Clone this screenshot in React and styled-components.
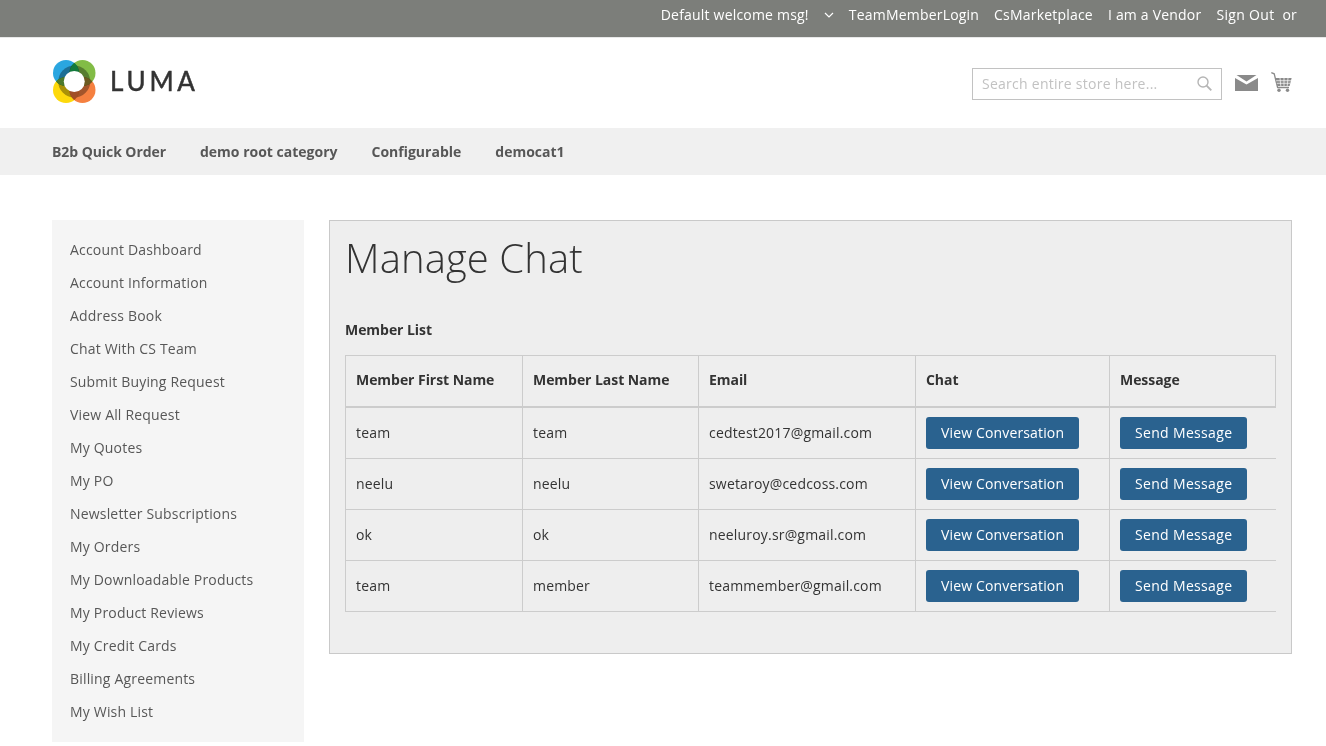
import React from "react";
import styled, { createGlobalStyle } from "styled-components";

const Global = createGlobalStyle`
  html, body { margin: 0; padding: 0; height: 746px; overflow: hidden; background: #fff; }
  body { font-family: "Open Sans", sans-serif; font-size: 14px; color: #333; letter-spacing: .18px; }
  * { box-sizing: border-box; }
`;

const TopBar = styled.div`
  height: 38px;
  background: #7c7e7a;
  border-bottom: 1px solid #e8e8e8;
  display: flex;
  justify-content: flex-end;
  align-items: center;
  padding: 0 29px 8px 0;
  color: #fff;
  font-size: 14px;
  letter-spacing: .2px;
`;
const TopItem = styled.span`
  margin-left: ${(p) => p.$gap ?? 15}px;
  letter-spacing: ${(p) => p.$spacing ?? 0.2}px;
  display: inline-flex;
  align-items: center;
`;
const Header = styled.header`
  height: 90px;
  padding: 0 34px 0 52px;
  display: flex;
  align-items: center;
  justify-content: space-between;
`;
const Logo = styled.div`
  display: flex;
  align-items: center;
  gap: 14px;
  margin-bottom: 3px;
`;
const LogoText = styled.span`
  font-family: "Lato", sans-serif;
  font-size: 26px;
  letter-spacing: 3.8px;
  color: #333;
  font-weight: 400;
  -webkit-text-stroke: .5px #333;
  padding-bottom: 2px;
`;
const HeaderRight = styled.div`
  display: flex;
  align-items: center;
  gap: 13px;
  margin-top: 2px;
`;
const Search = styled.div`
  width: 250px;
  height: 32px;
  border: 1px solid #c2c2c2;
  display: flex;
  align-items: center;
  justify-content: space-between;
  padding: 0 9px 2px;
  color: #c2c2c2;
  font-size: 14px;
  letter-spacing: .26px;
`;
const MailIcon = styled.svg`
  margin-bottom: 2px;
`;
const CartIcon = styled.svg`
  margin-bottom: 4px;
`;
const Nav = styled.nav`
  height: 47px;
  background: #f0f0f0;
  display: flex;
  align-items: center;
  padding-left: 52px;
  gap: 34px;
  font-weight: 700;
  color: #575757;
  letter-spacing: 0;
  span:first-child { letter-spacing: -.07px; }
`;
const Columns = styled.div`
  display: flex;
  padding: 45px 34px 0 52px;
  gap: 25px;
  align-items: flex-start;
`;
const Sidebar = styled.ul`
  list-style: none;
  margin: 0;
  padding: 13px 0 14px;
  width: 252px;
  flex: none;
  background: #f5f5f5;
`;
const SideItem = styled.li`
  height: 33px;
  line-height: 33px;
  padding-left: 18px;
  color: #575757;
`;
const Main = styled.main`
  flex: 1;
  min-width: 0;
  height: 434px;
  background: #eeeeee;
  border: 1px solid #c9c9c9;
  padding: 0 15px;
`;
const Title = styled.h1`
  margin: 10px 0 0;
  font-size: 40px;
  font-weight: 300;
  line-height: 54px;
  color: #333;
  letter-spacing: .1px;
`;
const SubTitle = styled.div`
  margin-top: 35px;
  font-weight: 700;
  line-height: 20px;
  color: #333;
  letter-spacing: -.05px;
`;
const Table = styled.table`
  margin-top: 15px;
  width: 931px;
  table-layout: fixed;
  border-collapse: collapse;
  tbody tr:first-child td { height: 52px; }
  tbody tr:not(:first-child) td:nth-child(-n+3) { padding-bottom: 2px; }
`;
const Col = styled.col`
  width: ${(p) => p.$w}px;
`;
const Th = styled.th`
  height: 51px;
  text-align: left;
  font-weight: 700;
  padding: 0 10px 2px;
  border: 1px solid #cccccc;
  border-bottom: 2px solid #cccccc;
  letter-spacing: -.05px;
`;
const Td = styled.td`
  height: 51px;
  padding: 0 10px;
  border-bottom: 1px solid #cccccc;
  border-left: 1px solid #cccccc;
`;
const Button = styled.button`
  height: 32px;
  padding: 0 15px;
  background: #2a628f;
  color: #fff;
  border: none;
  border-radius: 3px;
  font-family: inherit;
  font-size: 14px;
  line-height: 32px;
  display: block;
  letter-spacing: ${(p) => p.$spacing}px;
`;

const blend = { mixBlendMode: "multiply" };
const Mark = () => (
  <svg width="44" height="44" viewBox="0 0 44 44">
    <g style={{ isolation: "isolate" }}>
      <circle cx="14" cy="13" r="13" fill="#2aa6e0" style={blend} />
      <circle cx="30.5" cy="13" r="13" fill="#82bc46" style={blend} />
      <circle cx="14" cy="30" r="13" fill="#fdd90c" style={blend} />
      <circle cx="30.5" cy="30" r="13" fill="#f58040" style={blend} />
      <circle cx="22.25" cy="21.5" r="16" fill="#aaaaaa" style={blend} />
      <path d="M22.25 2.95 A13 13 0 0 1 22.25 23.05 A13 13 0 0 1 22.25 2.95 Z" fill="#137a3c" />
      <path d="M22.25 19.95 A13 13 0 0 1 22.25 40.05 A13 13 0 0 1 22.25 19.95 Z" fill="#a34f26" />
      <path d="M4.16 21.5 A13 13 0 0 1 23.84 21.5 A13 13 0 0 1 4.16 21.5 Z" fill="#4d7a2c" />
      <path d="M20.66 21.5 A13 13 0 0 1 40.34 21.5 A13 13 0 0 1 20.66 21.5 Z" fill="#6c5a20" />
      <circle cx="22.25" cy="21.5" r="10.5" fill="#fff" />
    </g>
  </svg>
);
const Loupe = () => (
  <svg width="15" height="15" viewBox="0 0 15 15" fill="none" stroke="#b5b5b5" strokeWidth="1.4">
    <circle cx="6" cy="6" r="5" />
    <path d="M9.6 9.6 L14.3 14.3" strokeWidth="1.9" />
  </svg>
);
const Mail = () => (
  <MailIcon width="23" height="16" viewBox="0 0 23 16">
    <path d="M1.5 0 L21.5 0 L11.5 6.5 Z" fill="#8a8a8a" />
    <path d="M0 3 L11.5 9.5 L23 3 L23 16 L0 16 Z" fill="#8a8a8a" />
  </MailIcon>
);
const Cart = () => (
  <CartIcon width="21" height="20" viewBox="0 0 21 20" fill="none">
    <path d="M0.3 0.6 L3.2 1.8 L6.6 15.5 L18 15.5" stroke="#8a8a8a" strokeWidth="1.3" />
    <path d="M4.6 6 L20.6 6 L18.6 14 L6.4 14 Z" fill="#8a8a8a" />
    <path d="M9 6 L9.8 14 M13 6 V14 M17 6 L16.2 14 M5.2 8.7 H20 M5.8 11.3 H19.3" stroke="#fff" strokeWidth=".7" />
    <circle cx="8" cy="18.3" r="1.7" fill="#8a8a8a" />
    <circle cx="16.5" cy="18.3" r="1.7" fill="#8a8a8a" />
  </CartIcon>
);
const Chevron = () => (
  <svg width="10" height="6" viewBox="0 0 10 6" fill="none" stroke="#fff" strokeWidth="1.2">
    <path d="M1 1 L5 5 L9 1" />
  </svg>
);

const side = [
  "Account Dashboard", "Account Information", "Address Book", "Chat With CS Team",
  "Submit Buying Request", "View All Request", "My Quotes", "My PO",
  "Newsletter Subscriptions", "My Orders", "My Downloadable Products", "My Product Reviews",
  "My Credit Cards", "Billing Agreements", "My Wish List",
];
const members = [
  ["team", "team", "cedtest2017@gmail.com"],
  ["neelu", "neelu", "swetaroy@cedcoss.com"],
  ["ok", "ok", "neeluroy.sr@gmail.com"],
  ["team", "member", "teammember@gmail.com"],
];
const widths = [177, 176, 217, 194, 166];

export default function App() {
  return (
    <>
      <Global />
      <TopBar>
        <TopItem>Default welcome msg!</TopItem>
        <TopItem><Chevron /></TopItem>
        <TopItem>TeamMemberLogin</TopItem>
        <TopItem>CsMarketplace</TopItem>
        <TopItem>I am a Vendor</TopItem>
        <TopItem $spacing={0.32}>Sign Out</TopItem>
        <TopItem $gap={8}>or</TopItem>
      </TopBar>
      <Header>
        <Logo>
          <Mark />
          <LogoText>LUMA</LogoText>
        </Logo>
        <HeaderRight>
          <Search>
            <span>Search entire store here...</span>
            <Loupe />
          </Search>
          <Mail />
          <Cart />
        </HeaderRight>
      </Header>
      <Nav>
        <span>B2b Quick Order</span>
        <span>demo root category</span>
        <span>Configurable</span>
        <span>democat1</span>
      </Nav>
      <Columns>
        <Sidebar>
          {side.map((s) => (
            <SideItem key={s}>{s}</SideItem>
          ))}
        </Sidebar>
        <Main>
          <Title>Manage Chat</Title>
          <SubTitle>Member List</SubTitle>
          <Table>
            <colgroup>
              {widths.map((w, i) => (
                <Col key={i} $w={w} />
              ))}
            </colgroup>
            <thead>
              <tr>
                <Th>Member First Name</Th>
                <Th>Member Last Name</Th>
                <Th>Email</Th>
                <Th>Chat</Th>
                <Th>Message</Th>
              </tr>
            </thead>
            <tbody>
              {members.map((m, i) => (
                <tr key={i}>
                  <Td>{m[0]}</Td>
                  <Td>{m[1]}</Td>
                  <Td>{m[2]}</Td>
                  <Td><Button $spacing={0.15}>View Conversation</Button></Td>
                  <Td><Button $spacing={0.33}>Send Message</Button></Td>
                </tr>
              ))}
            </tbody>
          </Table>
        </Main>
      </Columns>
    </>
  );
}
